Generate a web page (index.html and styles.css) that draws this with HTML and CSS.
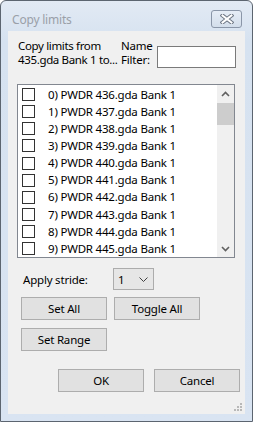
FILE: index.html
```html
<!DOCTYPE html>
<html>
<head>
<meta charset="utf-8">
<link rel="stylesheet" href="styles.css">
</head>
<body>
<div class="window">
  <div class="titlebar">
    <span class="title">Copy limits</span>
    <div class="close">
      <svg width="14" height="10" viewBox="0 0 14 10">
        <path d="M2.5 1.5 L11.5 8.5 M11.5 1.5 L2.5 8.5" stroke="#6b7482" stroke-width="4" stroke-linecap="square" fill="none"/>
        <path d="M2.5 1.5 L11.5 8.5 M11.5 1.5 L2.5 8.5" stroke="#ffffff" stroke-width="2" stroke-linecap="square" fill="none"/>
      </svg>
    </div>
  </div>
  <div class="client">
    <div class="header">
      <div class="desc">Copy limits from<br>435.gda Bank 1 to...</div>
      <div class="filter-label">Name<br>Filter:</div>
      <div class="filter-input"></div>
    </div>
    <div class="listbox">
      <div class="items">
        <div class="item"><span class="cb"></span><span class="lbl">0) PWDR 436.gda Bank 1</span></div>
        <div class="item"><span class="cb"></span><span class="lbl">1) PWDR 437.gda Bank 1</span></div>
        <div class="item"><span class="cb"></span><span class="lbl">2) PWDR 438.gda Bank 1</span></div>
        <div class="item"><span class="cb"></span><span class="lbl">3) PWDR 439.gda Bank 1</span></div>
        <div class="item"><span class="cb"></span><span class="lbl">4) PWDR 440.gda Bank 1</span></div>
        <div class="item"><span class="cb"></span><span class="lbl">5) PWDR 441.gda Bank 1</span></div>
        <div class="item"><span class="cb"></span><span class="lbl">6) PWDR 442.gda Bank 1</span></div>
        <div class="item"><span class="cb"></span><span class="lbl">7) PWDR 443.gda Bank 1</span></div>
        <div class="item"><span class="cb"></span><span class="lbl">8) PWDR 444.gda Bank 1</span></div>
        <div class="item"><span class="cb"></span><span class="lbl">9) PWDR 445.gda Bank 1</span></div>
      </div>
      <div class="scrollbar">
        <div class="arrow">
          <svg width="9" height="6" viewBox="0 0 9 6"><path d="M1 5 L4.5 1.5 L8 5" stroke="#606060" stroke-width="1.6" fill="none"/></svg>
        </div>
        <div class="thumb"></div>
        <div class="track"></div>
        <div class="arrow">
          <svg width="9" height="6" viewBox="0 0 9 6"><path d="M1 1 L4.5 4.5 L8 1" stroke="#606060" stroke-width="1.6" fill="none"/></svg>
        </div>
      </div>
    </div>
    <div class="stride-row">
      <span class="stride-label">Apply stride:</span>
      <div class="combo">
        <span>1</span>
        <svg width="9" height="5" viewBox="0 0 9 5"><path d="M0.5 0.5 L4.5 4.5 L8.5 0.5" stroke="#404040" stroke-width="1" fill="none"/></svg>
      </div>
    </div>
    <div class="btn-row first">
      <div class="btn">Set All</div>
      <div class="btn">Toggle All</div>
    </div>
    <div class="btn-row second">
      <div class="btn">Set Range</div>
    </div>
    <div class="footer">
      <div class="btn">OK</div>
      <div class="btn">Cancel</div>
    </div>
    <div class="grip">
      <svg width="8" height="8" viewBox="0 0 8 8" fill="#b8b8b8">
        <rect x="6" y="0" width="2" height="2"/>
        <rect x="3" y="3" width="2" height="2"/><rect x="6" y="3" width="2" height="2"/>
        <rect x="0" y="6" width="2" height="2"/><rect x="3" y="6" width="2" height="2"/><rect x="6" y="6" width="2" height="2"/>
      </svg>
    </div>
  </div>
</div>
</body>
</html>
```
FILE: styles.css
```css
* { box-sizing: border-box; }
html, body { margin: 0; padding: 0; background: #ffffff; }
body {
  font-family: "Noto Sans", "Open Sans", sans-serif;
  font-size: 11.5px;
  letter-spacing: -0.2px;
  color: #000;
}
.window {
  width: 253px;
  height: 422px;
  border: 1px solid #5c6570;
  border-radius: 6px 6px 0 0;
  background: linear-gradient(#e2eaf4, #d6e2f0 40px, #d9e4f2);
  padding: 0 7px 7px 7px;
  display: flex;
  flex-direction: column;
}
.titlebar {
  height: 30px;
  display: flex;
  align-items: flex-start;
  justify-content: space-between;
}
.title {
  margin-top: 11px;
  margin-left: 4px;
  color: #9aa0a8;
  font-size: 12px;
  line-height: 16px;
}
.close {
  margin-top: 9px;
  margin-right: 3px;
  width: 31px;
  height: 18px;
  border: 1px solid #8a96a8;
  border-radius: 3px;
  background: linear-gradient(#e6edf6, #d3deeb);
  display: flex;
  align-items: center;
  justify-content: center;
}
.client {
  position: relative;
  flex: 1;
  background: #f0f0f0;
  display: flex;
  flex-direction: column;
}
.header {
  margin-top: 8px;
  height: 45px;
  padding-left: 10px;
  display: flex;
  align-items: flex-start;
  line-height: 14px;
  white-space: nowrap;
}
.desc { width: 103px; letter-spacing: -0.35px; }
.filter-label { width: 36px; }
.filter-input {
  margin-top: 7px;
  width: 79px;
  height: 22px;
  background: #fff;
  border: 1px solid #7a7a7a;
}
.listbox {
  margin-left: 9px;
  width: 218px;
  height: 174px;
  border: 1px solid #828790;
  background: #fff;
  display: flex;
}
.items {
  flex: 1;
  padding: 1px 0 0 4px;
}
.item {
  height: 17.15px;
  display: flex;
  align-items: center;
  white-space: nowrap;
}
.cb {
  width: 13px;
  height: 13px;
  border: 1px solid #333333;
  background: #fff;
  flex: none;
}
.lbl { margin-left: 13px; line-height: 16px; }
.scrollbar {
  width: 17px;
  background: #f0f0f0;
  display: flex;
  flex-direction: column;
}
.arrow {
  height: 17px;
  display: flex;
  align-items: center;
  justify-content: center;
}
.thumb {
  margin-top: 1px;
  height: 22px;
  background: #cdcdcd;
}
.track { flex: 1; }
.stride-row {
  margin-top: 10px;
  height: 22px;
  padding-left: 15px;
  display: flex;
  align-items: center;
}
.stride-label { width: 90px; }
.combo {
  width: 41px;
  height: 22px;
  border: 1px solid #acacac;
  background: #e6e6e6;
  display: flex;
  align-items: center;
  justify-content: space-between;
  padding: 0 5px 0 4px;
}
.btn-row {
  padding-left: 13px;
  display: flex;
  gap: 7px;
}
.btn-row.first { margin-top: 7px; }
.btn-row.second { margin-top: 8px; }
.footer {
  margin-top: 18px;
  padding-left: 50px;
  display: flex;
  gap: 10px;
}
.btn {
  width: 86px;
  height: 23px;
  border: 1px solid #adadad;
  background: #e1e1e1;
  display: flex;
  align-items: center;
  justify-content: center;
}
.grip {
  position: absolute;
  right: 3px;
  bottom: 3px;
  width: 8px;
  height: 8px;
  display: flex;
}
```
